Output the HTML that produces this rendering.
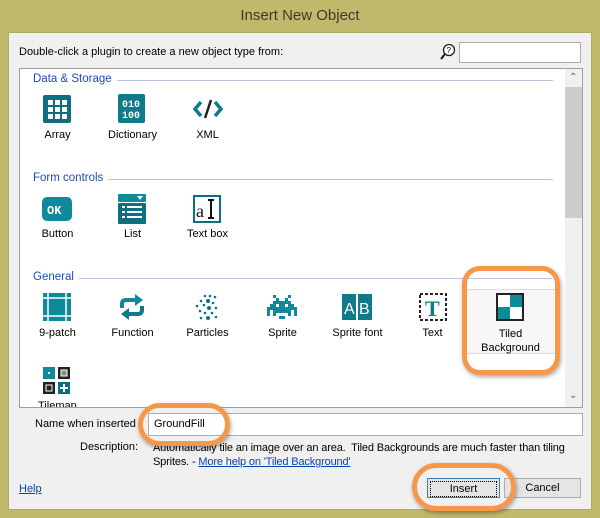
<!DOCTYPE html>
<html><head><style>
*{margin:0;padding:0;box-sizing:border-box}
body{width:600px;height:518px;background:#c0b96c;position:relative;overflow:hidden;font-family:"Liberation Sans",sans-serif;font-size:11px;color:#000}
.a{position:absolute}
.title{left:0;top:0;width:600px;height:32px;text-align:center;line-height:32px;font-size:15px;color:#3a3a2a}
.client{left:8px;top:32px;width:584px;height:478px;background:#f0f0f0;border:1px solid #b0aa60}
.list{left:19px;top:68px;width:564px;height:340px;background:#fff;border:1px solid #a0a0a0}
.hdr{color:#1a4cb8;font-size:11.5px;background:#fff;padding-right:5px;z-index:2}
.line{height:1px;background:#b8c4dc}
.lbl{width:75px;text-align:center;font-size:11px}
.btn{border:1px solid #adadad;background:#e5e5e5;text-align:center;line-height:18px}
.ring{border:5px solid #f6984a;border-radius:18px;box-shadow:1px 2px 4px rgba(0,0,0,.35)}
</style></head><body>
<div class="a title">Insert New Object</div>
<div class="a client"></div>
<div class="a" style="left:19px;top:46px">Double-click a plugin to create a new object type from:</div>
<svg class="a" style="left:440px;top:43px" width="16" height="18" viewBox="0 0 16 18"><circle cx="9" cy="7" r="5.5" fill="#fff" stroke="#222" stroke-width="1.3"/><path d="M5 11 L1 16" stroke="#222" stroke-width="2.2"/><text x="6.5" y="10" font-size="8" font-family="Liberation Sans">?</text></svg>
<div class="a" style="left:459px;top:42px;width:122px;height:21px;background:#fff;border:1px solid #abadb3"></div>
<div class="a list"></div>
<div class="a" style="left:565px;top:69px;width:17px;height:338px;background:#f0f0f0"></div>
<div class="a" style="left:565px;top:87px;width:17px;height:131px;background:#cdcdcd"></div>
<div class="a" style="left:569px;top:72px;color:#606060;font-size:10px">&#8963;</div>
<div class="a" style="left:569px;top:390px;color:#606060;font-size:10px">&#8964;</div>

<div class="a line" style="left:103px;top:80px;width:450px"></div>
<div class="a hdr" style="left:33px;top:73px">Data &amp; Storage</div>
<div class="a line" style="left:101px;top:179px;width:452px"></div>
<div class="a hdr" style="left:33px;top:172px">Form controls</div>
<div class="a line" style="left:73px;top:278px;width:480px"></div>
<div class="a hdr" style="left:33px;top:271px">General</div>

<!-- data row -->
<svg class="a" style="left:43px;top:95px" width="28" height="28"><rect width="28" height="28" rx="2" fill="#0e6f80"/><g fill="#fff"><rect x="5" y="5" width="5" height="5"/><rect x="12" y="5" width="5" height="5"/><rect x="19" y="5" width="5" height="5"/><rect x="5" y="12" width="5" height="5"/><rect x="12" y="12" width="5" height="5"/><rect x="19" y="12" width="5" height="5"/><rect x="5" y="19" width="5" height="5"/><rect x="12" y="19" width="5" height="5"/><rect x="19" y="19" width="5" height="5"/></g></svg>
<svg class="a" style="left:118px;top:94px" width="28" height="30"><rect width="27" height="29" rx="2" fill="#0e7a8a"/><text x="4" y="13" font-size="10" font-weight="bold" fill="#fff" font-family="Liberation Mono">010</text><text x="4" y="24" font-size="10" font-weight="bold" fill="#fff" font-family="Liberation Mono">100</text></svg>
<svg class="a" style="left:193px;top:97px" width="30" height="24"><path d="M8 5 L2 12 L8 19" stroke="#0e7a8a" stroke-width="3.5" fill="none"/><path d="M22 5 L28 12 L22 19" stroke="#0e7a8a" stroke-width="3.5" fill="none"/><path d="M18 3 L12 21" stroke="#222" stroke-width="2.5"/></svg>
<div class="a lbl" style="left:20px;top:129px">Array</div>
<div class="a lbl" style="left:95px;top:129px">Dictionary</div>
<div class="a lbl" style="left:170px;top:129px">XML</div>

<!-- form row -->
<svg class="a" style="left:42px;top:197px" width="30" height="24"><rect width="30" height="24" rx="5" fill="#0e8a9a"/><text x="5" y="17" font-size="12" font-weight="bold" fill="#fff" font-family="Liberation Mono">OK</text></svg>
<svg class="a" style="left:118px;top:194px" width="28" height="30"><rect width="28" height="8" rx="1" fill="#0e8a9a"/><path d="M19 2 L25 2 L22 6Z" fill="#fff"/><rect y="9" width="28" height="21" rx="1" fill="#0e6f80"/><g fill="#fff"><rect x="4" y="12" width="3" height="2"/><rect x="9" y="12" width="15" height="2"/><rect x="4" y="17" width="3" height="2"/><rect x="9" y="17" width="15" height="2"/><rect x="4" y="22" width="3" height="2"/><rect x="9" y="22" width="15" height="2"/></g></svg>
<svg class="a" style="left:193px;top:195px" width="28" height="28"><rect x="1" y="1" width="26" height="26" fill="#fff" stroke="#0e6f80" stroke-width="2"/><text x="3" y="22" font-size="18" font-family="Liberation Serif" fill="#111">a</text><path d="M15 5h6M18 5v18M15 23h6" stroke="#111" stroke-width="2"/></svg>
<div class="a lbl" style="left:20px;top:228px">Button</div>
<div class="a lbl" style="left:95px;top:228px">List</div>
<div class="a lbl" style="left:170px;top:228px">Text box</div>

<!-- general -->
<div class="a" style="left:463px;top:289px;width:94px;height:65px;background:#f7f7f7;border:1px solid #dcdcdc"></div>
<svg class="a" style="left:43px;top:293px" width="28" height="28"><rect width="28" height="28" fill="#0e8a9a"/><path d="M0 5H28M0 23H28M5 0V28M23 0V28" stroke="#fff" stroke-width="1.5"/></svg>
<svg class="a" style="left:118px;top:292px" width="28" height="30"><path d="M4 16 V12 Q4 8 8 8 H18" stroke="#0e8a9a" stroke-width="4" fill="none"/><path d="M17 2 L25 8 L17 14Z" fill="#0e8a9a"/><path d="M24 14 V18 Q24 22 20 22 H10" stroke="#0e7a8a" stroke-width="4" fill="none"/><path d="M11 16 L3 22 L11 28Z" fill="#0e7a8a"/></svg>
<svg class="a" style="left:193px;top:293px" width="28" height="28" fill="#0e6f80"><circle cx="12" cy="3" r="1.3"/><circle cx="17" cy="3" r="1.3"/><circle cx="22" cy="4" r="1.3"/><circle cx="8" cy="8" r="1.3"/><circle cx="15" cy="8" r="2"/><circle cx="20" cy="10" r="1.3"/><circle cx="4" cy="13" r="1.3"/><circle cx="11" cy="12" r="1.3"/><circle cx="16" cy="15" r="2"/><circle cx="23" cy="15" r="1.3"/><circle cx="7" cy="18" r="1.3"/><circle cx="12" cy="20" r="1.3"/><circle cx="19" cy="20" r="1.3"/><circle cx="15" cy="25" r="2"/><circle cx="8" cy="25" r="1.3"/><circle cx="23" cy="24" r="1.3"/></svg>
<svg class="a" style="left:267px;top:295px" width="30" height="24" fill="#0e8a9a"><path d="M6 0h3v3h3v3h6V3h3V0h3v3h-3v3h3v3h3v3h3v9h-3v-6h-3v6h-6v3h-3v-3h6v-3H9v3h6v3h-3v-3H6v-6H3v6H0v-9h3V9h3V6h3V3H6z M9 9v3h3V9z M18 9v3h3V9z"/></svg>
<svg class="a" style="left:342px;top:294px" width="30" height="26"><rect width="30" height="26" fill="#0e7a8a"/><rect x="14" y="0" width="2" height="26" fill="#fff"/><text x="2" y="20" font-size="16" fill="#fff" font-family="Liberation Sans">A</text><text x="17" y="20" font-size="16" fill="#fff" font-family="Liberation Sans">B</text></svg>
<svg class="a" style="left:419px;top:293px" width="28" height="28"><rect x="1" y="1" width="26" height="26" fill="none" stroke="#222" stroke-width="2" stroke-dasharray="3 2"/><text x="6" y="23" font-size="22" font-weight="bold" fill="#0e7a8a" font-family="Liberation Serif">T</text></svg>
<svg class="a" style="left:496px;top:293px" width="28" height="28"><rect x="1" y="1" width="26" height="26" fill="#fff" stroke="#222" stroke-width="2"/><rect x="14" y="2" width="12" height="12" fill="#0e8a9a"/><rect x="2" y="14" width="12" height="12" fill="#0e8a9a"/></svg>
<div class="a lbl" style="left:20px;top:327px">9-patch</div>
<div class="a lbl" style="left:95px;top:327px">Function</div>
<div class="a lbl" style="left:170px;top:327px">Particles</div>
<div class="a lbl" style="left:245px;top:327px">Sprite</div>
<div class="a lbl" style="left:320px;top:327px">Sprite font</div>
<div class="a lbl" style="left:395px;top:327px">Text</div>
<div class="a lbl" style="left:473px;top:327px;line-height:14px">Tiled<br>Background</div>
<svg class="a" style="left:43px;top:367px" width="28" height="30"><rect width="12" height="12" fill="#0e8a9a"/><rect x="5" y="5" width="2" height="2" fill="#fff"/><rect x="15" width="12" height="12" fill="#222"/><rect x="18" y="3" width="6" height="6" fill="#888" stroke="#fff"/><rect y="15" width="12" height="12" fill="#222"/><rect x="3" y="18" width="6" height="6" fill="#222" stroke="#fff"/><rect x="15" y="15" width="12" height="12" fill="#0e6f80"/><path d="M21 17v8M17 21h8" stroke="#fff" stroke-width="2"/></svg>
<div class="a" style="left:20px;top:400px;width:100px;height:7px;overflow:hidden"><div style="position:absolute;left:18px;top:0px;font-size:11px">Tilemap</div></div>

<div class="a" style="left:35px;top:418px">Name when inserted</div>
<div class="a" style="left:148px;top:413px;width:435px;height:23px;background:#fff;border:1px solid #abadb3;padding:4px 5px">GroundFill</div>
<div class="a" style="left:80px;top:441px">Description:</div>
<div class="a" style="left:153px;top:441px;width:440px;line-height:14px;letter-spacing:-0.15px">Automatically tile an image over an area.&nbsp; Tiled Backgrounds are much faster than tiling<br>Sprites. - <span style="color:#0645ad;text-decoration:underline">More help on 'Tiled Background'</span></div>
<div class="a" style="left:19px;top:483px;color:#0645ad;text-decoration:underline">Help</div>
<div class="a btn" style="left:427px;top:478px;width:73px;height:20px;border-color:#3c7fb1"><div style="margin:2px;border:1px dotted #000;line-height:14px">Insert</div></div>
<div class="a btn" style="left:504px;top:478px;width:77px;height:20px">Cancel</div>

<div class="a ring" style="left:462px;top:266px;width:98px;height:109px"></div>
<div class="a ring" style="left:138px;top:403px;width:92px;height:43px;border-radius:22px"></div>
<div class="a ring" style="left:412px;top:463px;width:104px;height:48px;border-radius:24px"></div>
</body></html>
